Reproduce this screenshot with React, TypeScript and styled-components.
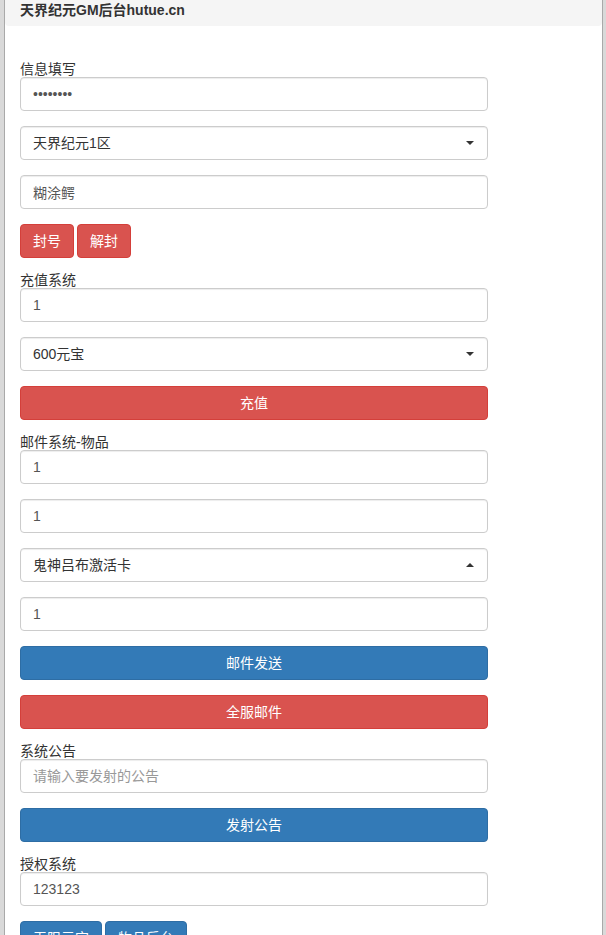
import styled, { createGlobalStyle, css } from 'styled-components';

const GlobalStyle = createGlobalStyle`
  html, body {
    margin: 0;
    padding: 0;
    background: #d9d9d9;
  }
  body {
    font-family: "Liberation Sans", "Noto Sans CJK SC", sans-serif;
    font-size: 14px;
    color: #333;
  }
  * {
    box-sizing: border-box;
  }
`;

const Frame = styled.div`
  padding: 0 3px 0 4px;
  min-height: 100vh;
`;

const Panel = styled.div`
  background: #fff;
  border-left: 1px solid #a9a9a9;
  border-right: 1px solid #a9a9a9;
  min-height: 100vh;
`;

const Heading = styled.div`
  height: 26px;
  padding: 0 15px;
  line-height: 20px;
  background: #f5f5f5;
  border-radius: 0 0 4px 4px;
  font-weight: bold;
  font-size: 14px;
  color: #333;
`;

const Body = styled.div`
  padding: 36px 15px 0;
`;

const Form = styled.div`
  width: 468px;
  display: flex;
  flex-direction: column;
  gap: 15px;
`;

const Section = styled.div`
  display: flex;
  flex-direction: column;
  gap: 15px;
`;

const Label = styled.label`
  display: block;
  height: 15px;
  line-height: 15px;
  margin-bottom: -15px;
  font-size: 14px;
  color: #333;
`;

const fieldBase = css`
  display: block;
  width: 100%;
  height: 34px;
  padding: 6px 12px;
  font-family: inherit;
  font-size: 14px;
  line-height: 20px;
  color: #555;
  background: #fff;
  border: 1px solid #ccc;
  border-radius: 4px;
  box-shadow: inset 0 1px 1px rgba(0, 0, 0, 0.075);
  outline: none;
`;

const Input = styled.input`
  ${fieldBase}

  &::placeholder {
    color: #999;
  }
`;

const SelectBox = styled.div`
  ${fieldBase}
  position: relative;
  color: #333;
  padding-right: 30px;
`;

const Caret = styled.span<{ $up?: boolean }>`
  position: absolute;
  right: 13px;
  top: 14px;
  width: 0;
  height: 0;
  border-left: 4px solid transparent;
  border-right: 4px solid transparent;
  ${p =>
    p.$up
      ? css`
          border-bottom: 4px solid #333;
        `
      : css`
          border-top: 4px solid #333;
        `}
`;

const ButtonRow = styled.div`
  display: flex;
  gap: 3px;
`;

const Button = styled.button<{ $variant: 'danger' | 'primary'; $block?: boolean }>`
  display: block;
  ${p => p.$block && 'width: 100%;'}
  height: 34px;
  padding: 6px 12px;
  font-family: inherit;
  font-size: 14px;
  line-height: 20px;
  color: #fff;
  border-radius: 4px;
  cursor: pointer;
  background: ${p => (p.$variant === 'danger' ? '#d9534f' : '#337ab7')};
  border: 1px solid ${p => (p.$variant === 'danger' ? '#d43f3a' : '#2e6da4')};
`;

const Select = ({ value, open }: { value: string; open?: boolean }) => (
  <SelectBox>
    {value}
    <Caret $up={open} />
  </SelectBox>
);

export default function App() {
  return (
    <>
      <GlobalStyle />
      <Frame>
        <Panel>
          <Heading>天界纪元GM后台hutue.cn</Heading>
          <Body>
            <Form>
              <Section>
                <Label>信息填写</Label>
                <Input type="password" defaultValue="12345678" />
                <Select value="天界纪元1区" />
                <Input defaultValue="糊涂鳄" />
                <ButtonRow>
                  <Button $variant="danger">封号</Button>
                  <Button $variant="danger">解封</Button>
                </ButtonRow>
              </Section>

              <Section>
                <Label>充值系统</Label>
                <Input defaultValue="1" />
                <Select value="600元宝" />
                <Button $variant="danger" $block>
                  充值
                </Button>
              </Section>

              <Section>
                <Label>邮件系统-物品</Label>
                <Input defaultValue="1" />
                <Input defaultValue="1" />
                <Select value="鬼神吕布激活卡" open />
                <Input defaultValue="1" />
                <Button $variant="primary" $block>
                  邮件发送
                </Button>
                <Button $variant="danger" $block>
                  全服邮件
                </Button>
              </Section>

              <Section>
                <Label>系统公告</Label>
                <Input placeholder="请输入要发射的公告" />
                <Button $variant="primary" $block>
                  发射公告
                </Button>
              </Section>

              <Section>
                <Label>授权系统</Label>
                <Input defaultValue="123123" />
                <ButtonRow>
                  <Button $variant="primary">无限元宝</Button>
                  <Button $variant="primary">物品后台</Button>
                </ButtonRow>
              </Section>
            </Form>
          </Body>
        </Panel>
      </Frame>
    </>
  );
}
